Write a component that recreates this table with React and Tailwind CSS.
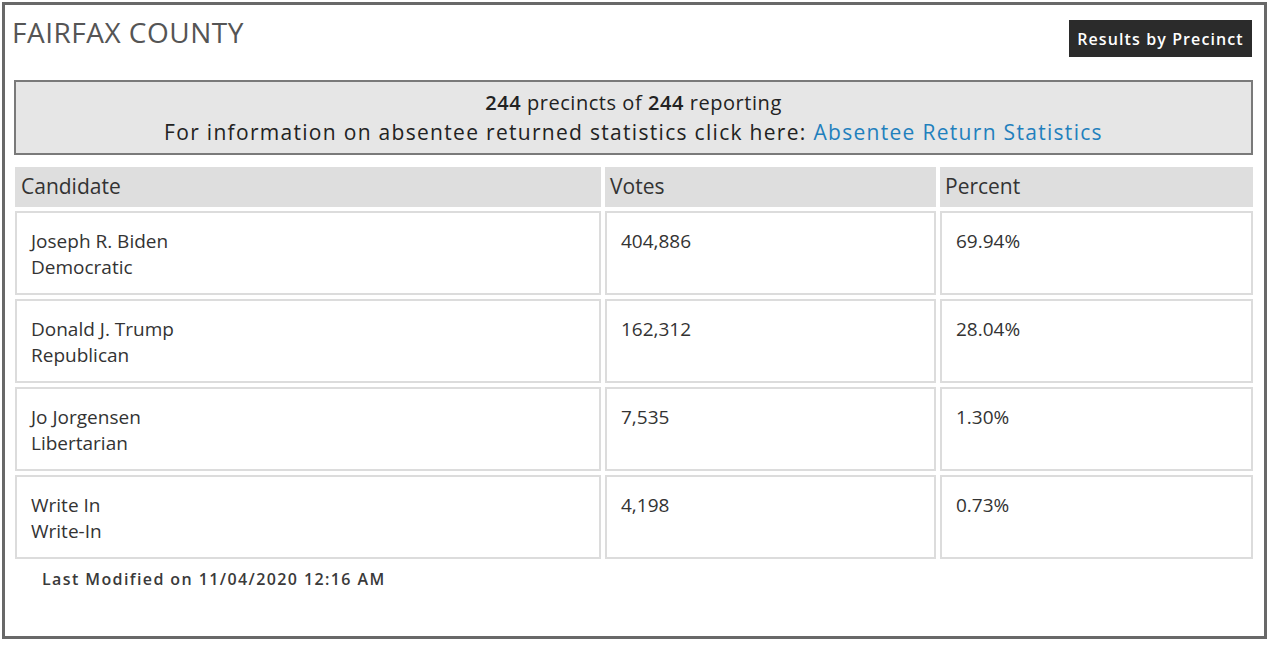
const rows = [
  { name: "Joseph R. Biden", party: "Democratic", votes: "404,886", pct: "69.94%" },
  { name: "Donald J. Trump", party: "Republican", votes: "162,312", pct: "28.04%" },
  { name: "Jo Jorgensen", party: "Libertarian", votes: "7,535", pct: "1.30%" },
  { name: "Write In", party: "Write-In", votes: "4,198", pct: "0.73%" },
];

const App = () => {
  return (
    <div className="h-[649px] w-[1280px] bg-white p-[2px] font-['Open_Sans',sans-serif] text-[#333]">
      <div className="h-[637px] w-[1265px] border-[3px] border-[#686868] pl-[9px] pr-[11px]">
        {/* Header */}
        <div className="flex items-start justify-between pt-[8px]">
          <h1 className="-ml-[2px] text-[28px] leading-[38px] tracking-[0.5px] text-[#555]">FAIRFAX COUNTY</h1>
          <button className="mt-[7px] mr-[1px] h-[37px] w-[183px] bg-[#2b2b2b] text-[16px] font-semibold tracking-[1.1px] text-white">
            Results by Precinct
          </button>
        </div>

        {/* Reporting box */}
        <div className="mt-[23px] border-2 border-[#7a7a7a] bg-[#e6e6e6] pt-[6px] pb-[6px] text-center">
          <p className="text-[20px] leading-[29px] tracking-[0.55px] text-[#222]">
            <span className="font-semibold">244</span> precincts of <span className="font-semibold">244</span> reporting
          </p>
          <p className="text-[21px] leading-[30px] tracking-[1.3px] text-[#222]">
            For information on absentee returned statistics click here:{" "}
            <a className="text-[#1f80bd]">Absentee Return Statistics</a>
          </p>
        </div>

        {/* Results table */}
        <div className="mt-[12px] ml-[1px] grid grid-cols-[586px_331px_313px] gap-[4px]">
          <div className="flex h-[40px] items-center bg-[#dedede] px-[6px] text-[21px] text-[#333]">Candidate</div>
          <div className="flex h-[40px] items-center bg-[#dedede] px-[5px] text-[21px] text-[#333]">Votes</div>
          <div className="flex h-[40px] items-center bg-[#dedede] px-[5px] text-[21px] text-[#333]">Percent</div>
          {rows.map((r) => (
            <div key={r.name} className="contents">
              <div className="h-[84px] border-2 border-[#dcdcdc] px-[14px] pt-[15px] text-[19px] leading-[26px] text-[#333]">
                <div>{r.name}</div>
                <div>{r.party}</div>
              </div>
              <div className="h-[84px] border-2 border-[#dcdcdc] px-[14px] pt-[15px] text-[19px] leading-[26px] text-[#333]">
                {r.votes}
              </div>
              <div className="h-[84px] border-2 border-[#dcdcdc] px-[14px] pt-[15px] text-[19px] leading-[26px] text-[#333]">
                {r.pct}
              </div>
            </div>
          ))}
        </div>

        <p className="mt-[8px] pl-[28px] text-[16px] font-semibold leading-[24px] tracking-[1.4px] text-[#3a3a3a]">
          Last Modified on 11/04/2020 12:16 AM
        </p>
      </div>
    </div>
  );
};

export default App;
